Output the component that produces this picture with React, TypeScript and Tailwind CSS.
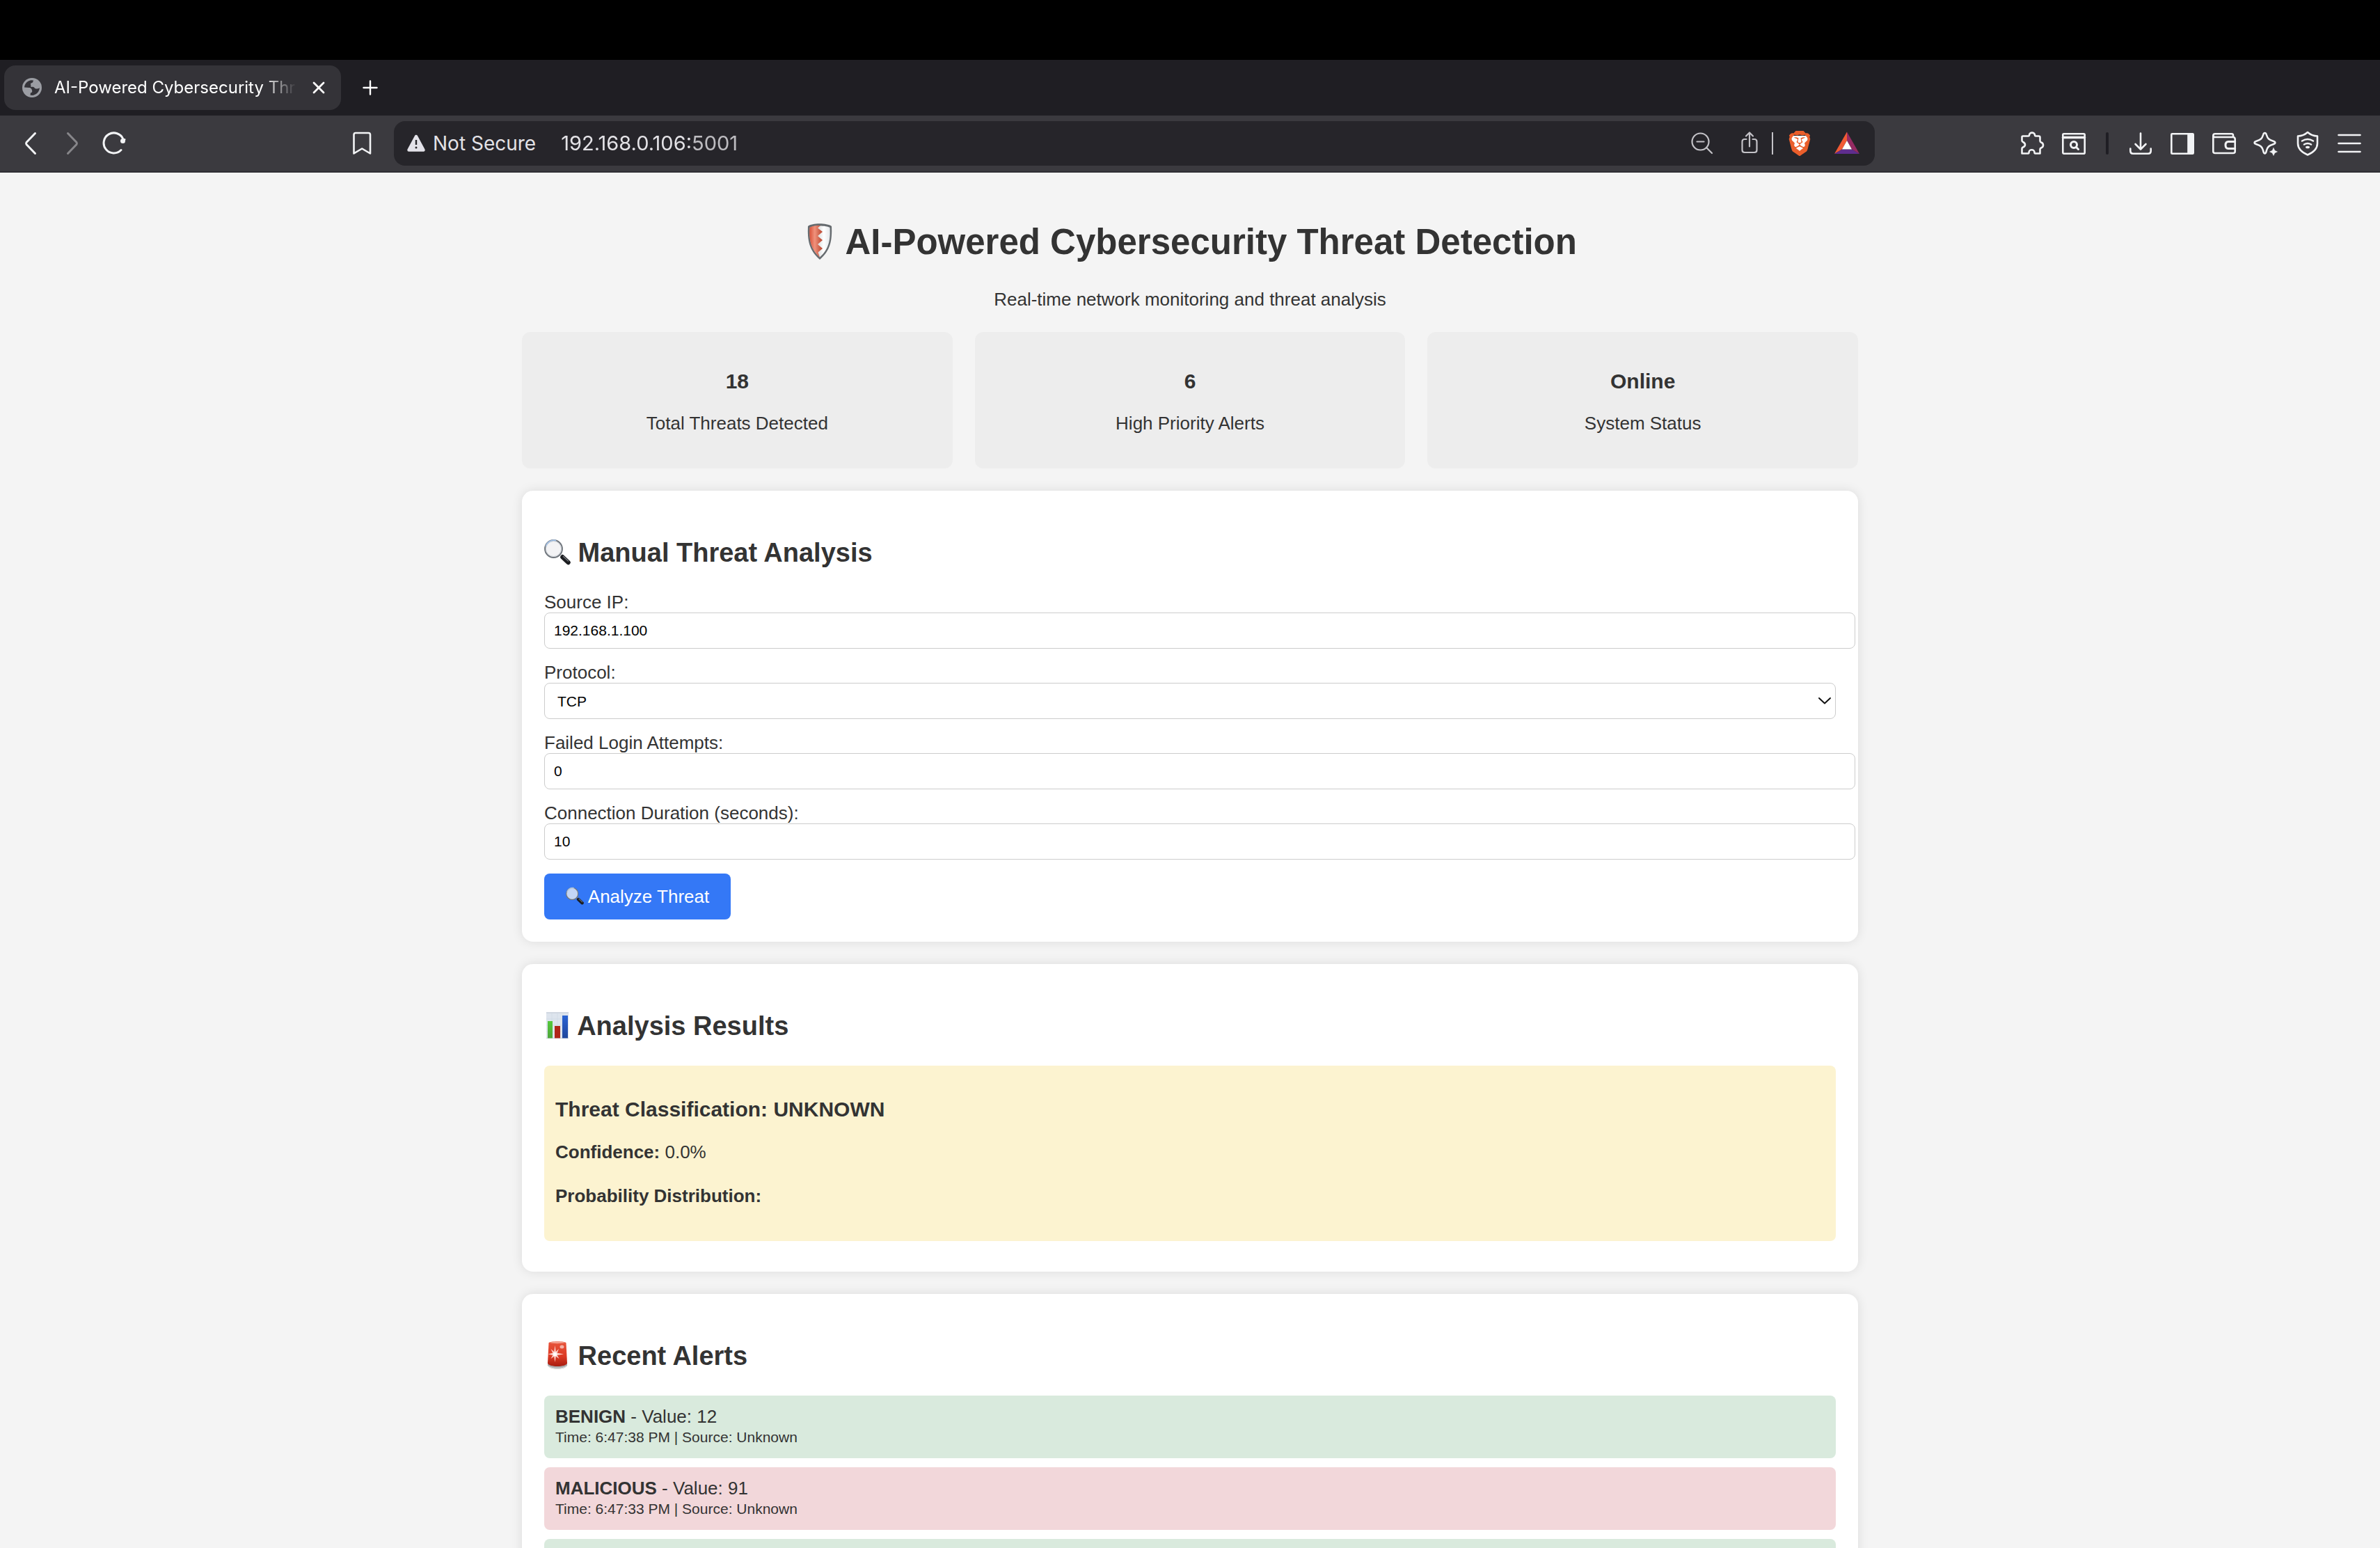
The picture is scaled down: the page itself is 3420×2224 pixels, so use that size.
import React from "react";
import { SiBrave } from "react-icons/si";

type IconProps = { className?: string };

function Icon({ className = "", children }: { className?: string; children: React.ReactNode }) {
  return (
    <svg
      viewBox="0 0 36 36"
      className={`size-9 shrink-0 ${className}`}
      fill="none"
      stroke="currentColor"
      strokeWidth={2.6}
      strokeLinecap="round"
      strokeLinejoin="round"
      aria-hidden="true"
    >
      {children}
    </svg>
  );
}

function IconButton({ label, children }: { label: string; children: React.ReactNode }) {
  return (
    <button type="button" aria-label={label} className="flex size-9 shrink-0 items-center justify-center">
      {children}
    </button>
  );
}

function GlobeIcon() {
  return (
    <svg viewBox="0 0 28 28" className="size-7 shrink-0" aria-hidden="true">
      <circle cx="14" cy="14" r="14" fill="#9b9da3" />
      <path
        fill="#343338"
        d="M3 13.6C3.2 8.4 7.4 4 12.6 3.2L16 3.4L15.2 6C14.6 7.3 12.6 7 12 8.3C11.6 9.5 12.8 10 12.3 11.2C11.6 12.4 13 13.3 14.5 12.8C16 12.4 17 13.4 17.8 14.4C19 15.8 22 16 24.9 14.3C24.5 19.5 20.6 24 15.4 24.9L11.6 24.7L11.8 21.7C12.3 20.9 14.2 21 14.2 19.4C14.2 16.6 12.8 14 10 14Z"
      />
    </svg>
  );
}

function ShieldEmoji() {
  return (
    <svg viewBox="0 0 48 56" className="inline-block h-14 w-12 align-[-10px]" role="img" aria-label="Shield">
      <defs>
        <linearGradient id="shield-red" x1="0" x2="1">
          <stop offset="0" stopColor="#d9533b" />
          <stop offset="0.4" stopColor="#f0927c" />
          <stop offset="1" stopColor="#b8432c" />
        </linearGradient>
        <linearGradient id="shield-white" x1="0" x2="1">
          <stop offset="0" stopColor="#a9adb0" />
          <stop offset="0.7" stopColor="#ffffff" />
          <stop offset="1" stopColor="#e4e7ea" />
        </linearGradient>
      </defs>
      <path d="M7 6C13 1 34 1 41 6C42 27 39 41 24 54C9 41 6 27 7 6Z" fill="#666b6f" />
      <path d="M9.500 8C14 4.500 34 4.500 38.500 8C39.500 27 36.500 39 24 50.500C11.500 39 8.500 27 9.500 8Z" fill="url(#shield-white)" />
      <path
        d="M9.500 8C13 5.500 19 5 25 5L21 8.500L28 14L21 20L28 26L21 32L28 38L21.500 43.500L24 50.500C11.500 39 8.500 27 9.500 8Z"
        fill="url(#shield-red)"
      />
    </svg>
  );
}

function MagnifierEmoji({ className = "", glass = "#f3f3f5" }: IconProps & { glass?: string }) {
  return (
    <svg viewBox="0 0 38 38" className={`inline-block ${className}`} role="img" aria-label="Magnifying glass">
      <path d="M23 25L26 22L29 25L26 28Z" fill="#9a9ea3" />
      <path d="M26.500 26.500L34.500 34" stroke="#1b1d20" strokeWidth="6.500" strokeLinecap="round" />
      <path d="M27.500 25.500L34.500 32" stroke="#70757b" strokeWidth="1.500" strokeLinecap="round" />
      <circle cx="13.500" cy="14.500" r="12.400" fill={glass} stroke="#6f757c" strokeWidth="2" />
      <path d="M2.500 11A12 12 0 0 1 17 2.600" fill="none" stroke="#9fbfe6" strokeWidth="2" />
      <circle cx="13.500" cy="14.500" r="11" fill="none" stroke="#c9ced4" strokeWidth="1" />
    </svg>
  );
}

function ChartEmoji() {
  return (
    <svg viewBox="0 0 38 38" className="inline-block size-[38px] align-[-5px]" role="img" aria-label="Bar chart">
      <defs>
        <linearGradient id="bar-green" x1="0" x2="0" y1="0" y2="1">
          <stop offset="0" stopColor="#55c93c" />
          <stop offset="1" stopColor="#4ea53a" />
        </linearGradient>
        <linearGradient id="bar-blue" x1="0" x2="0" y1="0" y2="1">
          <stop offset="0" stopColor="#2a63d4" />
          <stop offset="1" stopColor="#1f469c" />
        </linearGradient>
      </defs>
      <rect x="3" y="0" width="32" height="38" fill="#dde4ed" />
      <path d="M3 1H35M3 37.500H35" stroke="#c5ccd6" strokeWidth="1" />
      <path d="M11 2V38M19 2V38M27 2V38M3 10H35M3 19H35M3 28H35" stroke="#cfd8e4" strokeWidth="0.600" />
      <rect x="5" y="13" width="7" height="24.500" fill="url(#bar-green)" />
      <rect x="15" y="20" width="8" height="17.500" fill="#b02418" />
      <rect x="26" y="5" width="8" height="32.500" fill="url(#bar-blue)" />
    </svg>
  );
}

function SirenEmoji() {
  return (
    <svg viewBox="0 0 38 42" className="inline-block h-[42px] w-[38px] align-[-7px]" role="img" aria-label="Siren">
      <defs>
        <linearGradient id="siren-red" x1="0" x2="0" y1="0" y2="1">
          <stop offset="0" stopColor="#e8553c" />
          <stop offset="0.600" stopColor="#dc3a24" />
          <stop offset="1" stopColor="#a81c10" />
        </linearGradient>
      </defs>
      <path d="M5 31H33V35.500C31 42.500 7 42.500 5 35.500Z" fill="#a9abad" />
      <path d="M6 36.500C10 41 28 41 32 36.500" stroke="#e0e0e0" strokeWidth="1" fill="none" />
      <path d="M6.500 3.500C7 0.500 31 0.500 31.500 3.500L33 32.500C31 38.500 7 38.500 5 32.500Z" fill="url(#siren-red)" />
      <path d="M8 3C12 1 26 1 30 3C25 4.500 12 4.500 8 3Z" fill="#f3a08f" />
      <ellipse cx="25.500" cy="9" rx="3" ry="2.500" fill="#f3b1a6" />
      <path
        d="M15.500 7L16.800 16L21 12L18.700 17.800L28 19.500L18.700 21L21.500 26L16.800 22.800L15.500 31L14.200 22.800L9.500 26L12.300 21L5.500 19.500L12.300 17.800L9.500 12L14.200 16Z"
        fill="#fbd3cb"
      />
      <circle cx="15.500" cy="19.500" r="2.600" fill="#ffffff" />
    </svg>
  );
}

function TabStrip() {
  return (
    <div className="flex items-center bg-[#1f1e23] py-2 pl-1.5">
      <div className="flex h-16 w-[484px] items-center rounded-2xl bg-[#343338] pr-5 pl-[26px]">
        <GlobeIcon />
        <span className="ml-[18px] flex-1 overflow-hidden text-2xl font-normal whitespace-nowrap text-white [mask-image:linear-gradient(to_right,#000_86%,transparent)]">
          AI-Powered Cybersecurity Threat
        </span>
        <button type="button" aria-label="Close tab" className="ml-5 text-white">
          <svg viewBox="0 0 24 24" className="size-6" fill="none" stroke="currentColor" strokeWidth={2.8} strokeLinecap="round">
            <path d="M5 5L19 19M19 5L5 19" />
          </svg>
        </button>
      </div>
      <button type="button" aria-label="New tab" className="ml-[30px] text-white">
        <svg viewBox="0 0 24 24" className="size-6" fill="none" stroke="currentColor" strokeWidth={2.4} strokeLinecap="round">
          <path d="M12 2.500V21.500M2.500 12H21.500" />
        </svg>
      </button>
    </div>
  );
}

function AddressBar() {
  return (
    <div className="mr-[208px] ml-7 flex h-16 flex-1 items-center rounded-2xl bg-[#26252a] pr-[22px] pl-[18px] text-[28px] text-[#e3e2e6]">
      <svg viewBox="0 0 28 28" className="size-7 shrink-0" aria-hidden="true">
        <path d="M14 4L24.500 23.500H3.500Z" fill="#e3e2e9" stroke="#e3e2e9" strokeWidth="4.500" strokeLinejoin="round" />
        <path d="M14 9V16" stroke="#26252a" strokeWidth="2.400" />
        <circle cx="14" cy="20" r="1.500" fill="#26252a" />
      </svg>
      <span className="ml-2.5 whitespace-nowrap">Not Secure</span>
      <input
        type="text"
        aria-label="Address"
        defaultValue="192.168.0.106:5001"
        className="ml-9 min-w-0 flex-1 bg-transparent text-[29px] outline-none [mask-image:linear-gradient(to_right,#000_188px,rgba(0,0,0,0.8)_188px)]"
      />
      <div className="flex items-center text-[#c3c2c7]">
        <IconButton label="Zoom">
          <Icon className="stroke-[2.2px]">
            <circle cx="15.500" cy="15.500" r="12" />
            <path d="M10.500 15.500H20.500M24.500 24.500L32 32" />
          </Icon>
        </IconButton>
        <div className="w-8" />
        <IconButton label="Share">
          <Icon className="stroke-[2.2px]">
            <path d="M13.500 12H11C8.500 12 7.500 13 7.500 15.500V27.500C7.500 30 8.500 31 11 31H25C27.500 31 28.500 30 28.500 27.500V15.500C28.500 13 27.500 12 25 12H22.500" />
            <path d="M18 22.500V3M13 7.500L18 2.500L23 7.500" />
          </Icon>
        </IconButton>
        <div className="mr-5 ml-3.5 h-8 w-0.5 bg-[#c3c2c7]" />
        <button type="button" aria-label="Brave Shields" className="grid size-9 place-items-center">
          <svg viewBox="0 0 36 36" className="col-start-1 row-start-1 size-9" aria-hidden="true">
            <path d="M6 7H30L29 22L18 31L7 22Z" fill="#ffffff" />
          </svg>
          <SiBrave className="col-start-1 row-start-1 size-9 text-[#ea5e2b]" />
        </button>
        <div className="w-8" />
        <button type="button" aria-label="Brave Rewards" className="size-9">
          <svg viewBox="0 0 36 36" className="size-9" aria-hidden="true">
            <path d="M18 1.500L18 14L11 26.500L0 33Z" fill="#f15a34" />
            <path d="M18 1.500L36 33L25 26.500L18 14Z" fill="#952b63" />
            <path d="M0 33L11 26.500H25L36 33Z" fill="#5f2d8e" />
            <path d="M18 14L25 26.500H11Z" fill="#ffffff" />
          </svg>
        </button>
      </div>
    </div>
  );
}

function Toolbar() {
  return (
    <div className="flex items-center border-b-2 border-[#2f2e34] bg-[#3b3a3f] py-2 pr-[26px] pl-[26px] text-[#f2f3f5]">
      <div className="flex gap-6">
        <IconButton label="Back">
          <Icon className="stroke-[3px]">
            <path d="M24.500 3.500L12 16.500Q11 18 12 19.500L24.500 32.500" />
          </Icon>
        </IconButton>
        <IconButton label="Forward">
          <Icon className="stroke-[3px] text-[#87868a]">
            <path d="M11.500 3.500L24 16.500Q25 18 24 19.500L11.500 32.500" />
          </Icon>
        </IconButton>
        <IconButton label="Reload">
          <Icon className="stroke-[3px]">
            <path d="M28 27.500A14.500 14.500 0 1 1 31 12" />
            <circle cx="30.500" cy="14.500" r="3.500" fill="currentColor" stroke="none" />
            <path d="M30.500 14.500L33 12.500" />
          </Icon>
        </IconButton>
      </div>
      <div className="w-[320px]" />
      <IconButton label="Bookmark">
        <Icon>
          <path d="M6.500 5.500Q6.500 3 9 3H27.500Q30 3 30 5.500V32.500L18.200 25.500L6.500 32.500Z" />
        </Icon>
      </IconButton>
      <AddressBar />
      <div className="flex items-center gap-6">
        <IconButton label="Extensions">
          <Icon>
            <path d="M5 7.500H12.500C13.500 7.500 14 7 14 6C14 1.500 22 1.500 22 6C22 7 22.500 7.500 23.500 7.500H27.500Q29.500 7.500 29.500 9.500V14.500C29.500 15.500 30 16 31 16.500C35 18 35 23 31 24.500C30 25 29.500 25.500 29.500 26.500V32.500H22.500C21.500 32.500 21.500 32 21.500 31C21.500 26 13.500 26 13.500 31C13.500 32 13.500 32.500 12.500 32.500H3.500V25.500C3.500 24.500 4 24 5 23.500C9 22 9 18 5 16C4 15.500 3.500 15 3.500 14V9Q3.500 7.500 5 7.500Z" />
          </Icon>
        </IconButton>
        <IconButton label="Search tabs">
          <Icon>
            <rect x="2.300" y="4.300" width="31.400" height="28.400" rx="1.500" />
            <path d="M2.500 9.500H33.500" strokeWidth="3.500" />
            <circle cx="18" cy="20" r="4.500" strokeWidth="3" />
            <path d="M21.500 23.500L24.500 26.500" strokeWidth="3" />
          </Icon>
        </IconButton>
        <div className="mx-1 h-8 w-1 rounded-full bg-[#1f1e24]" />
        <IconButton label="Downloads">
          <Icon>
            <path d="M18 3.500V26M10.500 19L18 26.500L25.500 19M3.300 25.500V29Q3.300 32.700 7 32.700H29Q32.700 32.700 32.700 29V25.500" />
          </Icon>
        </IconButton>
        <IconButton label="Sidebar">
          <Icon>
            <rect x="2.300" y="4.300" width="31.400" height="28.400" rx="1" />
            <path d="M26.500 5.500H33V31.500H26.500Z" fill="currentColor" />
          </Icon>
        </IconButton>
        <IconButton label="Wallet">
          <Icon>
            <path d="M31 9V6.500Q31 4.300 29 4.300H5Q2.300 4.300 2.300 7V29.500Q2.300 32 5 32H31Q33.700 32 33.700 29.500V12Q33.700 9 31 9H5Q2.300 9 2.300 7" />
            <path d="M33.700 15.500H24Q20 15.500 20 20.500Q20 25.500 24 25.500H33.700" strokeWidth="3" />
          </Icon>
        </IconButton>
        <IconButton label="Leo AI">
          <Icon>
            <path d="M16.500 3C18 3 18.500 4 19 6C20.500 11 22.500 13 28 14.500C32.500 15.800 32.500 18.200 28 19.500C22.500 21 20.500 23 19 28C17.800 34 15.200 34 14 28C12.500 23 10.500 21 5 19.500C0.500 18.200 0.500 15.800 5 14.500C10.500 13 12.500 11 14 6C14.500 4 15 3 16.500 3Z" />
            <path d="M29 24.500L30.800 28.200L34.500 30L30.800 31.800L29 35.500L27.200 31.800L23.500 30L27.200 28.200Z" fill="currentColor" strokeWidth="0.500" />
          </Icon>
        </IconButton>
        <IconButton label="VPN">
          <Icon>
            <path d="M18 2C22 5.500 27 7.500 32 7.500V18C32 27 25 31.500 18 34.500C11 31.500 4 27 4 18V7.500C9 7.500 14 5.500 18 2Z" />
            <path d="M10 14.500Q18 9.500 26 14.500M13 19.500Q18 16.500 23 19.500" />
            <ellipse cx="18" cy="23.500" rx="3" ry="1.800" fill="currentColor" stroke="none" />
          </Icon>
        </IconButton>
        <IconButton label="Menu">
          <Icon>
            <path d="M2.500 6H33.500M2.500 18H33.500M2.500 30H33.500" />
          </Icon>
        </IconButton>
      </div>
    </div>
  );
}

function StatCard({ value, label }: { value: string; label: string }) {
  return (
    <div className="flex-1 rounded-xl bg-[#ededed] p-6 text-center">
      <h3 className="mt-[30px] mb-[29px] text-[30px] leading-[34px] font-bold">{value}</h3>
      <p className="mb-[26px]">{label}</p>
    </div>
  );
}

function Card({ icon, title, children }: { icon: React.ReactNode; title: string; children: React.ReactNode }) {
  return (
    <section className="mt-8 rounded-2xl bg-white p-8 shadow-[0_0_16px_rgba(0,0,0,0.1)]">
      <h2 className="my-[35px] h-11 text-[38px] leading-[44px] font-bold">
        {icon} {title}
      </h2>
      {children}
    </section>
  );
}

function TextField({ id, label, type, value }: { id: string; label: string; type: string; value: string }) {
  return (
    <div className="mb-5">
      <label htmlFor={id} className="block">
        {label}
      </label>
      <input
        id={id}
        type={type}
        defaultValue={value}
        className="block h-[52px] w-[calc(100%+28px)] rounded-lg border border-[#ccc] bg-white px-[13px] text-[21px] text-black"
      />
    </div>
  );
}

function AnalysisForm() {
  return (
    <form onSubmit={(event) => event.preventDefault()}>
      <TextField id="source-ip" label="Source IP:" type="text" value="192.168.1.100" />
      <div className="mb-5">
        <label htmlFor="protocol" className="block">
          Protocol:
        </label>
        <div className="grid items-center">
          <select
            id="protocol"
            defaultValue="TCP"
            className="col-start-1 row-start-1 h-[52px] w-full appearance-none rounded-lg border border-[#ccc] bg-white px-[18px] text-[21px] text-black"
          >
            <option>TCP</option>
            <option>UDP</option>
            <option>ICMP</option>
          </select>
          <svg
            viewBox="0 0 20 12"
            className="pointer-events-none col-start-1 row-start-1 mr-1.5 h-3 w-5 justify-self-end"
            fill="none"
            stroke="#111111"
            strokeWidth={2}
            strokeLinecap="round"
            strokeLinejoin="round"
            aria-hidden="true"
          >
            <path d="M2 2L10 9.500L18 2" />
          </svg>
        </div>
      </div>
      <TextField id="failed-logins" label="Failed Login Attempts:" type="number" value="0" />
      <TextField id="duration" label="Connection Duration (seconds):" type="number" value="10" />
      <button type="submit" className="block h-[66px] rounded-lg bg-[#3478f6] px-[31px] text-white">
        <MagnifierEmoji className="size-[26px] align-[-3px]" glass="#c3d6f6" /> Analyze Threat
      </button>
    </form>
  );
}

const alerts = [
  { level: "BENIGN", value: 12, time: "6:47:38 PM", color: "bg-[#d9eadd]" },
  { level: "MALICIOUS", value: 91, time: "6:47:33 PM", color: "bg-[#f2d7da]" },
];

export default function App() {
  return (
    <div className="flex h-screen flex-col overflow-hidden bg-[#f4f4f4]">
      <header className="shrink-0 bg-black pt-[86px] font-[Inter,sans-serif]">
        <TabStrip />
        <Toolbar />
      </header>
      <main className="min-h-0 flex-1 overflow-hidden px-8 pt-[71px] font-['Liberation_Sans',Arial,sans-serif] text-[26px] leading-[29px] text-[#333]">
        <div className="mx-auto max-w-[1920px]">
          <h1 className="h-[58px] text-center text-[51px] leading-[58px] font-bold">
            <ShieldEmoji /> AI-Powered Cybersecurity Threat Detection
          </h1>
          <p className="mt-[39px] mb-8 text-center">Real-time network monitoring and threat analysis</p>
          <div className="flex gap-8">
            <StatCard value="18" label="Total Threats Detected" />
            <StatCard value="6" label="High Priority Alerts" />
            <StatCard value="Online" label="System Status" />
          </div>

          <Card icon={<MagnifierEmoji className="size-[38px] align-[-5px]" />} title="Manual Threat Analysis">
            <AnalysisForm />
          </Card>

          <Card icon={<ChartEmoji />} title="Analysis Results">
            <div className="mb-3 rounded-lg bg-[#fcf3d0] p-4">
              <h3 className="my-[30px] text-[30px] leading-[34px] font-bold">Threat Classification: UNKNOWN</h3>
              <p>
                <strong>Confidence:</strong> 0.0%
              </p>
              <h4 className="my-[34px] font-bold">Probability Distribution:</h4>
            </div>
          </Card>

          <Card icon={<SirenEmoji />} title="Recent Alerts">
            <ul className="flex flex-col gap-[13px]">
              {alerts.map((alert) => (
                <li key={alert.time} className={`rounded-lg p-4 ${alert.color}`}>
                  <div>
                    <strong>{alert.level}</strong> - Value: {alert.value}
                  </div>
                  <div className="text-[21px]">Time: {alert.time} | Source: Unknown</div>
                </li>
              ))}
              <li className="h-[90px] rounded-lg bg-[#d9eadd]" />
            </ul>
          </Card>
        </div>
      </main>
    </div>
  );
}
